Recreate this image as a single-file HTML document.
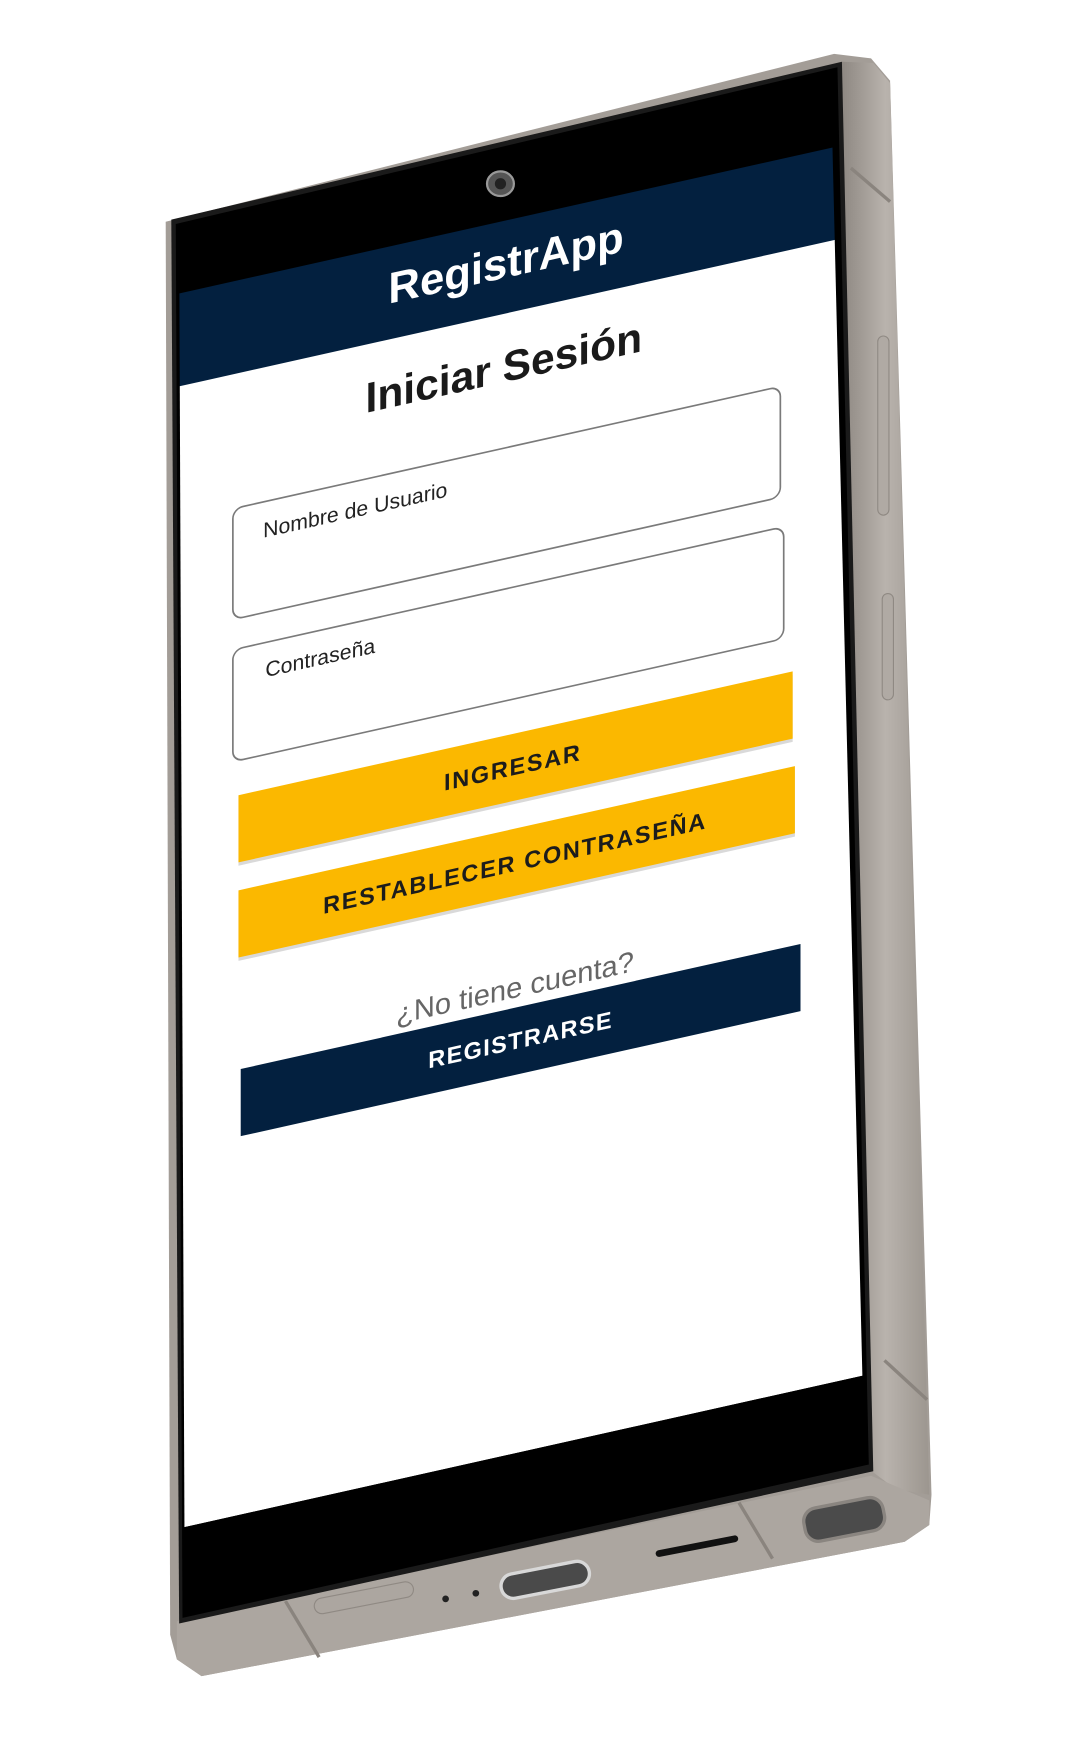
<!DOCTYPE html>
<html><head><meta charset="utf-8"><style>
html,body{margin:0;padding:0;background:#fff;width:1086px;height:1758px;overflow:hidden}
svg{display:block}
text{font-family:"Liberation Sans","DejaVu Sans",sans-serif}
</style></head><body>
<svg width="1086" height="1758" viewBox="0 0 970 1570" xmlns="http://www.w3.org/2000/svg">
<defs>
<clipPath id="scr"><polygon points="160,207 742,68 772,1300 165,1425"/></clipPath>
<linearGradient id="side" x1="0" x2="1" y1="0" y2="0"><stop offset="0" stop-color="#8e8882"/><stop offset="0.5" stop-color="#b9b3ad"/><stop offset="1" stop-color="#9c968f"/></linearGradient>
</defs>
<polygon points="148,198 745,48 778,52 795,72 832,1335 830,1362 808,1377 180,1497 158,1482 152,1460" fill="#a39d97"/>
<polygon points="752,55 780,56 795,74 830,1335 800,1330 776,1312" fill="url(#side)"/>
<line x1="760" y1="150" x2="795" y2="180" stroke="#8a847e" stroke-width="3"/>
<line x1="790" y1="1215" x2="828" y2="1250" stroke="#8a847e" stroke-width="3"/>
<rect x="784" y="300" width="10" height="160" rx="5" fill="#b0aaa4" stroke="#8f8983"/>
<rect x="788" y="530" width="10" height="95" rx="5" fill="#b0aaa4" stroke="#8f8983"/>
<polygon points="158,1448 778,1318 830,1340 830,1362 808,1377 180,1497 158,1482" fill="#aca6a0"/>
<line x1="255" y1="1430" x2="285" y2="1480" stroke="#8a847e" stroke-width="3"/>
<line x1="660" y1="1342" x2="690" y2="1392" stroke="#8a847e" stroke-width="3"/>
<rect x="280" y="1420" width="90" height="14" rx="7" fill="none" stroke="#8f8983" transform="rotate(-11 325 1427)"/>
<circle cx="398" cy="1428" r="3" fill="#222"/><circle cx="425" cy="1423" r="3" fill="#222"/>
<rect x="447" y="1400" width="80" height="22" rx="11" fill="#4a4a4a" stroke="#d8d8d8" stroke-width="3" transform="rotate(-11 487 1411)"/>
<rect x="585" y="1378" width="75" height="6" rx="3" fill="#111" transform="rotate(-11 622 1381)"/>
<rect x="718" y="1342" width="72" height="30" rx="12" fill="#4b4b4b" stroke="#8a8580" stroke-width="3" transform="rotate(-11 754 1357)"/>
<polygon points="153,196 752,55 780,1314 160,1450" fill="#1a1a1a"/>
<polygon points="157,200 748,60 776,1308 163,1445" fill="#000"/>
<g clip-path="url(#scr)">
<rect x="150" y="50" width="650" height="1420" fill="#000"/>
<g transform="translate(160,0) matrix(1,-0.2234,0,1,0,0)">
 <rect x="-10" y="262" width="640" height="84" fill="#03203f"/>
 <rect x="-10" y="345" width="640" height="1020" fill="#fff"/>
 <text x="292" y="313" text-anchor="middle" font-size="39" font-weight="bold" fill="#fff">RegistrApp</text>
 <text x="290" y="406" text-anchor="middle" font-size="38" fill="#1a1a1a" font-weight="600">Iniciar Sesión</text>
 <rect x="48" y="465" width="489" height="99" rx="9" fill="#fff" stroke="#7a7a7a" stroke-width="1.5"/>
 <text x="75" y="497" font-size="19" fill="#222">Nombre de Usuario</text>
 <rect x="48" y="591" width="492" height="100" rx="9" fill="#fff" stroke="#7a7a7a" stroke-width="1.5"/>
 <text x="77" y="622" font-size="19" fill="#222">Contraseña</text>
 <rect x="53" y="725" width="495" height="60" fill="#d9d9d9"/>
 <rect x="53" y="722" width="495" height="60" fill="#fbb800"/>
 <text x="298" y="759" text-anchor="middle" font-size="21" font-weight="bold" fill="#1c1c1c" letter-spacing="1.5">INGRESAR</text>
 <rect x="53" y="810" width="497" height="60" fill="#d9d9d9"/>
 <rect x="53" y="807" width="497" height="60" fill="#fbb800"/>
 <text x="300" y="845" text-anchor="middle" font-size="21" font-weight="bold" fill="#1c1c1c" letter-spacing="1.5">RESTABLECER CONTRASEÑA</text>
 <text x="300" y="958" text-anchor="middle" font-size="26" fill="#666">¿No tiene cuenta?</text>
 <rect x="55" y="967" width="500" height="60" fill="#03203f"/>
 <text x="305" y="1004" text-anchor="middle" font-size="21" font-weight="bold" fill="#fff" letter-spacing="1.2">REGISTRARSE</text>
 <rect x="-10" y="1365" width="660" height="100" fill="#000"/>
</g>
</g>
<ellipse cx="447" cy="164" rx="12" ry="11" fill="#555" stroke="#999" stroke-width="2"/>
<circle cx="447" cy="164" r="5" fill="#222"/>
</svg>
</body></html>
